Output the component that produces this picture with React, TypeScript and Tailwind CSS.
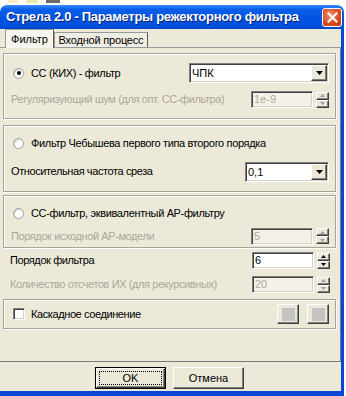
const ui = { fontFamily: '"Liberation Sans", Arial, sans-serif' };

function Sunken({ children, className = "" }: { children?: React.ReactNode; className?: string }) {
  return (
    <div
      className={`border border-t-[#808080] border-l-[#808080] border-b-white border-r-white shadow-[inset_1px_1px_0_#404040,inset_-1px_-1px_0_#d4d0c8] ${className}`}
    >
      {children}
    </div>
  );
}

function Raised({ children, className = "" }: { children?: React.ReactNode; className?: string }) {
  return (
    <div
      className={`border border-t-white border-l-white border-b-[#404040] border-r-[#404040] shadow-[inset_-1px_-1px_0_#808080] ${className}`}
    >
      {children}
    </div>
  );
}

function Arrow({ dir = "down", disabled = false }: { dir?: "up" | "down"; disabled?: boolean }) {
  const c = disabled ? "#a0a0a0" : "#000";
  return (
    <svg width="5" height="3" viewBox="0 0 5 3">
      {dir === "down" ? <path d="M0 0h5L2.5 3z" fill={c} /> : <path d="M0 3h5L2.5 0z" fill={c} />}
    </svg>
  );
}

function Select({ value, className = "" }: { value: string; className?: string }) {
  return (
    <Sunken className={`flex h-[20px] items-stretch bg-white pr-[1px] ${className}`}>
      <span className="block flex-1 pl-[2px] text-[11px] leading-[18px] text-black">{value}</span>
      <Raised className="my-[1px] flex w-[16px] items-center justify-center bg-[#ece9d8]">
        <svg width="7" height="4" viewBox="0 0 7 4">
          <path d="M0 0h7L3.5 4z" fill="#000" />
        </svg>
      </Raised>
    </Sunken>
  );
}

function Spin({ value, disabled = false }: { value: string; disabled?: boolean }) {
  return (
    <div className="flex items-center gap-[3px]">
      <Sunken className={`flex h-[17px] w-[62px] items-center ${disabled ? "bg-[#f4f2e8]" : "bg-white"}`}>
        <span className={`block pl-[2px] text-[11px] leading-[13px] ${disabled ? "text-[#aca899]" : "text-black"}`}>
          {value}
        </span>
      </Sunken>
      <div className="flex flex-col">
        <Raised className="flex h-[8px] w-[13px] items-center justify-center bg-[#ece9d8]">
          <Arrow dir="up" disabled={disabled} />
        </Raised>
        <Raised className="flex h-[8px] w-[13px] items-center justify-center bg-[#ece9d8]">
          <Arrow dir="down" disabled={disabled} />
        </Raised>
      </div>
    </div>
  );
}

function Radio({ checked = false, label }: { checked?: boolean; label: string }) {
  return (
    <div className="flex items-center gap-[7px]">
      <div className="flex h-[11px] w-[11px] items-center justify-center rounded-full border border-[#a0a0a0] bg-white shadow-[inset_1px_1px_0_#d4d0c8]">
        {checked ? <div className="h-[4px] w-[4px] rounded-full bg-black" /> : null}
      </div>
      <span className="text-[11px] tracking-[-0.35px] text-black">{label}</span>
    </div>
  );
}

function Group({ children, className = "" }: { children: React.ReactNode; className?: string }) {
  return (
    <div className={`ml-[3px] mr-[4px] border border-[#a8a49a] shadow-[inset_1px_1px_0_#fff,1px_1px_0_#fff] ${className}`}>
      {children}
    </div>
  );
}

const label = "text-[11px] tracking-[-0.4px]";

export default function App() {
  return (
    <div className="h-[396px] w-[346px] overflow-hidden bg-[#fdfdf4]" style={ui}>
      <div className="flex h-[5px] items-start">
        <div className="ml-[8px] h-[3px] w-[10px] bg-[#f3f0c8]" />
        <div className="ml-[8px] h-[3px] w-[12px] bg-[#ede7a8]" />
        <div className="ml-[8px] h-[3px] w-[14px] bg-[#6b6b6b]" />
      </div>
      <div className="flex w-[344px] flex-col">
        {/* title bar */}
        <div className="flex h-[24px] items-center justify-between rounded-t-[7px] bg-[linear-gradient(180deg,#3a8cff_0%,#0a5ee8_18%,#0055e5_50%,#0050dc_85%,#0046c8_100%)] pl-[6px] pr-[2px]">
          <span className="whitespace-nowrap text-[13px] font-bold tracking-[-0.3px] text-white [text-shadow:1px_1px_0_#0a1f6e]">
            Стрела 2.0 - Параметры режекторного фильтра
          </span>
          <div className="flex h-[19px] w-[20px] items-center justify-center rounded-[3px] border border-white bg-[radial-gradient(circle_at_40%_35%,#f0906c,#d8481e_60%,#c0381a)]">
            <svg width="11" height="11" viewBox="0 0 11 11">
              <path d="M1.5 1.5l8 8M9.5 1.5l-8 8" stroke="#fff" strokeWidth="2" strokeLinecap="square" />
            </svg>
          </div>
        </div>

        {/* body */}
        <div className="flex h-[362px] flex-col border-r-[3px] border-r-[#0846d8] bg-[#ece9d8]">
          {/* tabs */}
          <div className="flex h-[18px] items-end pl-[5px]">
            <div className="relative z-10 -mb-[1px] flex h-[19px] w-[49px] items-center justify-center border border-b-0 border-[#919b9c] border-r-[#5a5a5a] bg-[#f7f5ee] text-[11px] text-black">
              Фильтр
            </div>
            <div className="flex h-[15px] w-[94px] items-center justify-center border border-b-0 border-[#919b9c] border-r-[#5a5a5a] bg-[#f0eee2] text-[11px] tracking-[-0.2px] text-black">
              Входной процесс
            </div>
          </div>
          {/* panel */}
          <div className="flex h-[315px] flex-col border border-l-0 border-[#919b9c] border-r-[#7a7a7a] border-b-[#7a7a7a] bg-[#ece9d8] pt-[5px]">
            <Group className="h-[66px] pl-[9px] pr-[6px]">
              <div className="mt-[9px] flex items-center justify-between">
                <Radio checked label="СС (КИХ) - фильтр" />
                <Select value="ЧПК" className="w-[140px]" />
              </div>
              <div className="mt-[8px] flex items-center justify-between">
                <span className={`-ml-[2px] ${label} text-[#aca899]`}>Регуляризующий шум (для опт. СС-фильтра)</span>
                <Spin value="1e-9" disabled />
              </div>
            </Group>
            <Group className="mt-[6px] h-[67px] pl-[9px] pr-[6px]">
              <div className="mt-[9px]">
                <Radio label="Фильтр Чебышева первого типа второго порядка" />
              </div>
              <div className="mt-[10px] flex items-center justify-between">
                <span className={`-ml-[2px] ${label} text-black`}>Относительная частота среза</span>
                <Select value="0,1" className="w-[84px]" />
              </div>
            </Group>
            <Group className="mt-[3px] h-[53px] pl-[9px] pr-[6px]">
              <div className="mt-[9px]">
                <Radio label="СС-фильтр, эквивалентный АР-фильтру" />
              </div>
              <div className="mt-[6px] flex items-center justify-between">
                <span className={`-ml-[2px] ${label} text-[#aca899]`}>Порядок исходной АР-модели</span>
                <Spin value="5" disabled />
              </div>
            </Group>
            <div className="mt-[4px] flex items-center justify-between pl-[10px] pr-[10px]">
              <span className={`${label} text-black`}>Порядок фильтра</span>
              <Spin value="6" />
            </div>
            <div className="mt-[7px] flex items-center justify-between pl-[10px] pr-[10px]">
              <span className={`${label} text-[#aca899]`}>Количество отсчетов ИХ (для рекурсивных)</span>
              <Spin value="20" disabled />
            </div>
            <Group className="mt-[6px] flex h-[30px] items-center justify-between pl-[9px] pr-[6px]">
              <div className="flex items-center gap-[6px]">
                <Sunken className="h-[12px] w-[12px] bg-white" />
                <span className={`${label} text-black`}>Каскадное соединение</span>
              </div>
              <div className="flex gap-[8px]">
                <Raised className="flex h-[20px] w-[22px] items-center justify-center bg-[#ece9d8]">
                  <div className="h-[13px] w-[13px] bg-[#c4c4c4]" />
                </Raised>
                <Raised className="flex h-[20px] w-[22px] items-center justify-center bg-[#ece9d8]">
                  <div className="h-[13px] w-[13px] bg-[#c4c4c4]" />
                </Raised>
              </div>
            </Group>
          </div>
          {/* buttons */}
          <div className="mt-[5px] flex justify-center gap-[7px] pr-[2px]">
            <div className="border border-black">
              <Raised className="flex h-[20px] w-[69px] items-center justify-center bg-[#ece9d8] p-[2px]">
                <div className="flex h-full w-full items-center justify-center border border-dotted border-black text-[11px] text-black">
                  OK
                </div>
              </Raised>
            </div>
            <Raised className="flex h-[22px] w-[71px] items-center justify-center bg-[#ece9d8] text-[11px] text-black">
              Отмена
            </Raised>
          </div>
        </div>
        <div className="h-[5px] bg-[#0846d8]" />
      </div>
    </div>
  );
}
